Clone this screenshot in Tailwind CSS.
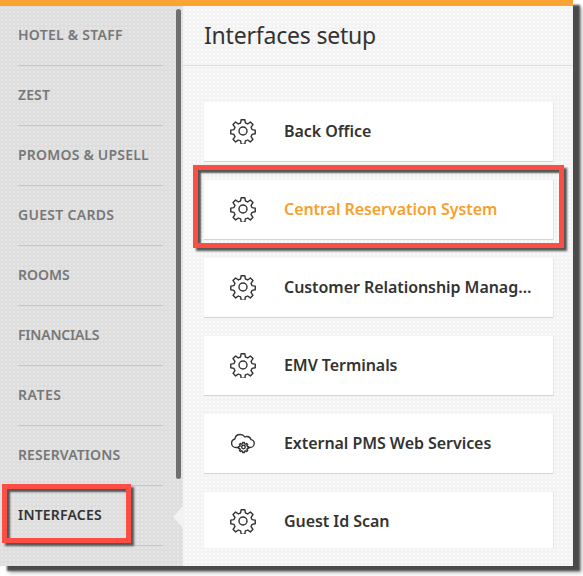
<!DOCTYPE html>
<html><head><meta charset="utf-8"><script src="https://cdn.jsdelivr.net/npm/@tailwindcss/browser@4"></script></head>
<body class="bg-white min-h-[576px]">
<svg class="hidden"><defs>
<g id="gear"><circle cx="12" cy="12" r="3.7"/><path d="M10.3 1.6h3.4l.5 3a7.6 7.6 0 0 1 2.1.9l2.5-1.8 2.4 2.4-1.8 2.5c.4.7.7 1.4.9 2.1l3 .5v3.4l-3 .5a7.6 7.6 0 0 1-.9 2.1l1.8 2.5-2.4 2.4-2.5-1.8a7.6 7.6 0 0 1-2.1.9l-.5 3h-3.4l-.5-3a7.6 7.6 0 0 1-2.1-.9l-2.5 1.8-2.4-2.4 1.8-2.5a7.6 7.6 0 0 1-.9-2.1l-3-.5v-3.4l3-.5c.2-.7.5-1.4.9-2.1L2.8 6.1l2.4-2.4 2.5 1.8a7.6 7.6 0 0 1 2.1-.9z"/></g>
</defs></svg>
<div class="relative w-[573px] h-[566px] shadow-[7px_5px_2px_#4a4a4a,9px_7px_4px_#bbb] bg-[#f3f3f3] bg-[radial-gradient(#fbfbfb_1px,transparent_1px)] bg-[length:4px_4px] font-['Noto_Sans',sans-serif]">
  <div class="h-[6px] bg-[#fba333]"></div>
  <div class="flex h-[560px] overflow-hidden">
    <aside class="relative w-[183px] shrink-0 bg-[#dedede] bg-[radial-gradient(#e6e6e6_1px,transparent_1px)] bg-[length:4px_4px] pl-[18px] pr-[20px]">
      <ul class="text-[14px] font-semibold text-[#777]">
        <li class="h-[60px] flex items-center border-b border-[#c6c6c6] pb-[2px] tracking-[0.25px]">HOTEL &amp; STAFF</li>
        <li class="h-[60px] flex items-center border-b border-[#c6c6c6] pb-[2px] tracking-[0.1px]">ZEST</li>
        <li class="h-[60px] flex items-center border-b border-[#c6c6c6] pb-[2px] tracking-[0.2px]">PROMOS &amp; UPSELL</li>
        <li class="h-[60px] flex items-center border-b border-[#c6c6c6] pb-[2px] tracking-[0.3px]">GUEST CARDS</li>
        <li class="h-[60px] flex items-center border-b border-[#c6c6c6] pb-[2px]">ROOMS</li>
        <li class="h-[60px] flex items-center border-b border-[#c6c6c6] pb-[2px] tracking-[-0.2px]">FINANCIALS</li>
        <li class="h-[60px] flex items-center border-b border-[#c6c6c6] pb-[2px] tracking-[0.5px]">RATES</li>
        <li class="h-[60px] flex items-center border-b border-[#c6c6c6] pb-[2px] tracking-[0.1px]">RESERVATIONS</li>
        <li class="h-[60px] flex items-center border-b border-[#c6c6c6] pb-[2px] text-[#333] tracking-[0.2px]">INTERFACES</li>
      </ul>
      <div class="absolute left-[176px] top-[3px] w-[5px] h-[470px] rounded-full bg-[#6f6f6f]"></div>
      <div class="absolute left-[173px] top-[500px] w-0 h-0 border-y-[11px] border-y-transparent border-r-[10px] border-r-[#f3f3f3]"></div>
    </aside>
    <main class="flex-1 min-w-0">
      <h1 class="h-[60px] pl-[21px] flex items-center text-[23px] tracking-[-0.2px] text-[#333] border-b border-[#dcdcdc]">Interfaces setup</h1>
      <div class="pl-[21px] pr-[19px] pt-[36px] flex flex-col gap-[18px] text-[#333] text-[16px] font-semibold tracking-[-0.06px]">
        <div class="h-[60px] flex items-center bg-white border-b border-[#d4d4d4] border-r border-r-[#e4e4e4] pl-[26px] pb-[2px] gap-[28px] shrink-0"><svg class="shrink-0" width="26" height="26" viewBox="0 0 24 24" fill="none" stroke="#333" stroke-width="1.3" stroke-linejoin="round"><use href="#gear"/></svg><span>Back Office</span></div>
        <div class="h-[60px] flex items-center bg-white border-b border-[#d4d4d4] border-r border-r-[#e4e4e4] pl-[26px] pb-[2px] gap-[28px] shrink-0 text-[#f9a02c]"><svg class="shrink-0" width="26" height="26" viewBox="0 0 24 24" fill="none" stroke="#333" stroke-width="1.3" stroke-linejoin="round"><use href="#gear"/></svg><span>Central Reservation System</span></div>
        <div class="h-[60px] flex items-center bg-white border-b border-[#d4d4d4] border-r border-r-[#e4e4e4] pl-[26px] pb-[2px] pr-[19px] gap-[28px] shrink-0"><svg class="shrink-0" width="26" height="26" viewBox="0 0 24 24" fill="none" stroke="#333" stroke-width="1.3" stroke-linejoin="round"><use href="#gear"/></svg><span class="truncate">Customer Relationship Management Systems</span></div>
        <div class="h-[60px] flex items-center bg-white border-b border-[#d4d4d4] border-r border-r-[#e4e4e4] pl-[26px] pb-[2px] gap-[28px] shrink-0"><svg class="shrink-0" width="26" height="26" viewBox="0 0 24 24" fill="none" stroke="#333" stroke-width="1.3" stroke-linejoin="round"><use href="#gear"/></svg><span>EMV Terminals</span></div>
        <div class="h-[60px] flex items-center bg-white border-b border-[#d4d4d4] border-r border-r-[#e4e4e4] pl-[26px] pb-[2px] gap-[27px] shrink-0"><svg class="shrink-0" width="27" height="27" viewBox="0 0 27 27" fill="none" stroke="#333" stroke-width="1.35" stroke-linejoin="round" stroke-linecap="round"><path d="M8.5 18.5H6C3.5 18.5 1.6 16.6 1.6 14.2c0-2 1.4-3.7 3.3-4.2C5.3 7.2 7.6 5.5 10.2 5.5c2 0 3.7 1 4.7 2.5.6-.3 1.3-.5 2-.5 2 0 3.6 1.3 4 3.1 1.9.3 3.3 1.9 3.3 3.8 0 2.2-1.9 4.1-4.2 4.1H18"/><circle cx="13.5" cy="18" r="1.8"/><path d="M12.7 13.5h1.6l.3 1.3 1 .4 1-.8 1.1 1.1-.8 1 .4 1 1.3.2v1.6l-1.3.3-.4.9.8 1-1.1 1.1-1-.8-1 .4-.3 1.3h-1.6l-.3-1.3-.9-.4-1 .8-1.1-1.1.8-1-.4-.9-1.3-.3v-1.6l1.3-.2.4-1-.8-1 1.1-1.1 1 .8.9-.4z"/></svg><span>External PMS Web Services</span></div>
        <div class="h-[56px] flex items-center bg-white pl-[26px] pt-[2px] gap-[28px] shrink-0 border-r border-r-[#e4e4e4]"><svg class="shrink-0" width="26" height="26" viewBox="0 0 24 24" fill="none" stroke="#333" stroke-width="1.3" stroke-linejoin="round"><use href="#gear"/></svg><span>Guest Id Scan</span></div>
      </div>
    </main>
  </div>
  <div class="absolute left-[193px] top-[165px] w-[371px] h-[83px] border-[5px] border-[#fb4f45] shadow-[3px_3px_2px_#555,inset_3px_3px_2px_#555]"></div>
  <div class="absolute left-[2px] top-[484px] w-[129px] h-[59px] border-[5px] border-[#fb4f45] shadow-[3px_3px_2px_#555,inset_3px_3px_2px_#555]"></div>
</div>
</body></html>
